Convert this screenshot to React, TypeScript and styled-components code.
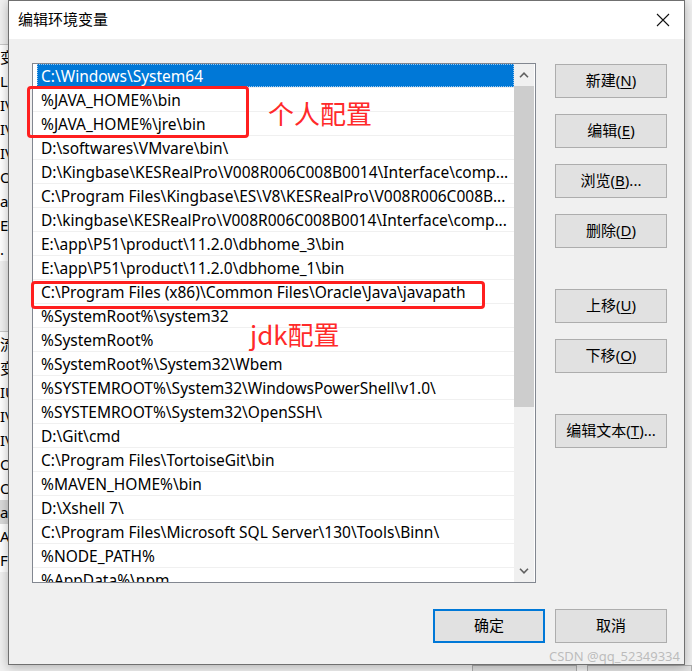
import React from "react";
import styled, { createGlobalStyle } from "styled-components";

const UI_FONT = `"Noto Sans", "Noto Sans CJK SC", sans-serif`;
const CJK_FONT = `"Noto Sans CJK SC", "Noto Sans", sans-serif`;

const GlobalStyle = createGlobalStyle`
  html, body { margin: 0; padding: 0; }
  body {
    width: 692px;
    height: 671px;
    overflow: hidden;
    background: #f3f3f3;
    font-family: ${UI_FONT};
  }
`;

const Desktop = styled.div`
  position: relative;
  width: 692px;
  height: 671px;
  overflow: hidden;
  background: #f3f3f3;
`;

/* ---------- background window peeking out at the left / bottom ---------- */
const BackWindow = styled.div`
  display: flex;
  flex-direction: column;
  height: 671px;
  background: #f0f0f0;
`;

const BackGroup = styled.div<{ $top: number }>`
  display: flex;
  flex-direction: column;
  margin-top: ${(p) => p.$top}px;
  border-top: 1px solid #c8c8c8;
  background: #fff;
  width: 40px;
`;

const BackRow = styled.div<{ $hl?: boolean; $cjk?: boolean }>`
  height: 24px;
  line-height: 24px;
  font-size: 15px;
  font-family: ${(p) => (p.$cjk ? CJK_FONT : UI_FONT)};
  color: #000;
  white-space: nowrap;
  background: ${(p) => (p.$hl ? "#d9d9d9" : "transparent")};
`;

const BackFooter = styled.div`
  display: flex;
  gap: 10px;
  padding-left: 472px;
  margin-top: auto;
  height: 6px;
`;

const BackButton = styled.div`
  width: 111px;
  height: 20px;
  border: 1px solid #adadad;
  background: #e1e1e1;
`;

/* ---------- dialog ---------- */
const Dialog = styled.div`
  position: absolute;
  left: 8px;
  top: 0;
  width: 677px;
  height: 665px;
  box-sizing: border-box;
  border: 1px solid #707070;
  background: #f0f0f0;
  box-shadow: 0 2px 10px rgba(0, 0, 0, 0.28);
  display: flex;
  flex-direction: column;
`;

const TitleBar = styled.div`
  flex: none;
  height: 38px;
  box-sizing: border-box;
  background: #fff;
  display: flex;
  align-items: center;
  justify-content: space-between;
  padding: 0 14px 2px 9px;
`;

const Title = styled.span`
  font-family: ${CJK_FONT};
  font-size: 15px;
  line-height: 20px;
  color: #000;
`;

const CloseIcon = styled.svg`
  width: 14px;
  height: 14px;
  display: block;
  margin-top: 2px;
`;

const Body = styled.div`
  display: flex;
  align-items: flex-start;
  padding: 24px 0 0 23px;
`;

const ListBox = styled.div`
  flex: none;
  width: 504px;
  height: 520px;
  box-sizing: border-box;
  border: 1px solid #828790;
  background: #fff;
  display: flex;
  padding-right: 1px;
  overflow: hidden;
`;

const Rows = styled.div`
  flex: 1;
  display: flex;
  flex-direction: column;
  overflow: hidden;
`;

const Row = styled.div`
  flex: none;
  height: 24px;
  box-sizing: border-box;
  padding-left: 4px;
  border-bottom: 1px solid #f0f0f0;
  display: flex;
`;

const Cell = styled.div<{ $selected?: boolean }>`
  flex: 1;
  height: 23px;
  box-sizing: border-box;
  padding-left: 4px;
  font-size: 15.5px;
  line-height: 24px;
  white-space: nowrap;
  overflow: hidden;
  color: ${(p) => (p.$selected ? "#fff" : "#000")};
  background: ${(p) => (p.$selected ? "#0078d7" : "transparent")};
  outline: ${(p) => (p.$selected ? "1px dotted #9cc8ee" : "none")};
  outline-offset: -1px;
`;

const ScrollBar = styled.div`
  flex: none;
  width: 20px;
  background: #f0f0f0;
  display: flex;
  flex-direction: column;
`;

const ScrollArrow = styled.div`
  flex: none;
  height: 22px;
  display: flex;
  align-items: center;
  justify-content: center;
`;

const Thumb = styled.div`
  flex: none;
  height: 321px;
  background: #cdcdcd;
`;

const Track = styled.div`
  flex: 1;
`;

const SideButtons = styled.div`
  display: flex;
  flex-direction: column;
  margin-left: 19px;
  padding-top: 1px;
`;

const Button = styled.div<{ $gap?: number; $primary?: boolean }>`
  width: 112px;
  height: 34px;
  box-sizing: border-box;
  margin-top: ${(p) => p.$gap ?? 0}px;
  padding-bottom: 3px;
  border: ${(p) => (p.$primary ? "2px solid #0078d7" : "1px solid #adadad")};
  background: #e1e1e1;
  display: flex;
  align-items: center;
  justify-content: center;
  font-family: ${CJK_FONT};
  font-size: 15px;
  line-height: 20px;
  color: #000;
  white-space: nowrap;
`;

const Mnemonic = styled.span`
  font-family: ${UI_FONT};
  text-decoration: underline;
  text-underline-offset: 2px;
`;

const Latin = styled.span`
  font-family: ${UI_FONT};
`;

const Footer = styled.div`
  display: flex;
  justify-content: flex-end;
  gap: 10px;
  padding: 26px 17px 0 0;
`;

/* ---------- annotations ---------- */
const Mark = styled.div`
  position: absolute;
  box-sizing: border-box;
  border: 3px solid #ff1f1f;
  border-radius: 4px;
`;

const Note = styled.div`
  position: absolute;
  font-family: ${CJK_FONT};
  font-size: 26px;
  line-height: 30px;
  color: #ff2a2a;
  white-space: nowrap;
`;

const Watermark = styled.div`
  position: absolute;
  right: 12px;
  bottom: 6px;
  font-family: ${UI_FONT};
  font-size: 13px;
  color: rgba(170, 170, 170, 0.75);
  white-space: nowrap;
`;

const paths = [
  "C:\\Windows\\System64",
  "%JAVA_HOME%\\bin",
  "%JAVA_HOME%\\jre\\bin",
  "D:\\softwares\\VMvare\\bin\\",
  "D:\\Kingbase\\KESRealPro\\V008R006C008B0014\\Interface\\comp...",
  "C:\\Program Files\\Kingbase\\ES\\V8\\KESRealPro\\V008R006C008B...",
  "D:\\kingbase\\KESRealPro\\V008R006C008B0014\\Interface\\comp...",
  "E:\\app\\P51\\product\\11.2.0\\dbhome_3\\bin",
  "E:\\app\\P51\\product\\11.2.0\\dbhome_1\\bin",
  "C:\\Program Files (x86)\\Common Files\\Oracle\\Java\\javapath",
  "%SystemRoot%\\system32",
  "%SystemRoot%",
  "%SystemRoot%\\System32\\Wbem",
  "%SYSTEMROOT%\\System32\\WindowsPowerShell\\v1.0\\",
  "%SYSTEMROOT%\\System32\\OpenSSH\\",
  "D:\\Git\\cmd",
  "C:\\Program Files\\TortoiseGit\\bin",
  "%MAVEN_HOME%\\bin",
  "D:\\Xshell 7\\",
  "C:\\Program Files\\Microsoft SQL Server\\130\\Tools\\Binn\\",
  "%NODE_PATH%",
  "%AppData%\\npm",
];

const backTop = ["变量", "L", "IV", "IV", "IV", "Or", "a", "E", "."];
const backBottom = ["流", "变量", "IU", "IV", "IV", "OF", "OS", "a", "A", "F"];

const Chevron = ({ up }: { up?: boolean }) => (
  <svg width="10" height="6" viewBox="0 0 10 6">
    <polyline
      points={up ? "1,5.2 5,1.2 9,5.2" : "1,0.8 5,4.8 9,0.8"}
      fill="none"
      stroke="#606060"
      strokeWidth="1.6"
    />
  </svg>
);

export default function App() {
  return (
    <>
      <GlobalStyle />
      <Desktop>
        <BackWindow>
          <BackGroup $top={44}>
            {backTop.map((t, i) => (
              <BackRow key={i} $cjk={i === 0}>
                {t}
              </BackRow>
            ))}
          </BackGroup>
          <BackGroup $top={70}>
            {backBottom.map((t, i) => (
              <BackRow key={i} $cjk={i < 2} $hl={t === "a"}>
                {t}
              </BackRow>
            ))}
          </BackGroup>
          <BackFooter>
            <BackButton />
            <BackButton />
          </BackFooter>
        </BackWindow>

        <Dialog>
          <TitleBar>
            <Title>编辑环境变量</Title>
            <CloseIcon viewBox="0 0 14 14">
              <path d="M1 1 L13 13 M13 1 L1 13" stroke="#111" strokeWidth="1.1" />
            </CloseIcon>
          </TitleBar>
          <Body>
            <ListBox>
              <Rows>
                {paths.map((p, i) => (
                  <Row key={i}>
                    <Cell $selected={i === 0}>{p}</Cell>
                  </Row>
                ))}
              </Rows>
              <ScrollBar>
                <ScrollArrow>
                  <Chevron up />
                </ScrollArrow>
                <Thumb />
                <Track />
                <ScrollArrow>
                  <Chevron />
                </ScrollArrow>
              </ScrollBar>
            </ListBox>
            <SideButtons>
              <Button>
                新建<Latin>(</Latin>
                <Mnemonic>N</Mnemonic>
                <Latin>)</Latin>
              </Button>
              <Button $gap={16}>
                编辑<Latin>(</Latin>
                <Mnemonic>E</Mnemonic>
                <Latin>)</Latin>
              </Button>
              <Button $gap={16}>
                浏览<Latin>(</Latin>
                <Mnemonic>B</Mnemonic>
                <Latin>)...</Latin>
              </Button>
              <Button $gap={16}>
                删除<Latin>(</Latin>
                <Mnemonic>D</Mnemonic>
                <Latin>)</Latin>
              </Button>
              <Button $gap={41}>
                上移<Latin>(</Latin>
                <Mnemonic>U</Mnemonic>
                <Latin>)</Latin>
              </Button>
              <Button $gap={16}>
                下移<Latin>(</Latin>
                <Mnemonic>O</Mnemonic>
                <Latin>)</Latin>
              </Button>
              <Button $gap={41}>
                编辑文本<Latin>(</Latin>
                <Mnemonic>T</Mnemonic>
                <Latin>)...</Latin>
              </Button>
            </SideButtons>
          </Body>
          <Footer>
            <Button $primary>确定</Button>
            <Button>取消</Button>
          </Footer>
        </Dialog>

        <Mark style={{ left: 27, top: 86, width: 222, height: 52 }} />
        <Note style={{ left: 268, top: 98 }}>个人配置</Note>
        <Mark style={{ left: 31, top: 281, width: 454, height: 28 }} />
        <Note style={{ left: 250, top: 319 }}>jdk配置</Note>
        <Watermark>CSDN @qq_52349334</Watermark>
      </Desktop>
    </>
  );
}
